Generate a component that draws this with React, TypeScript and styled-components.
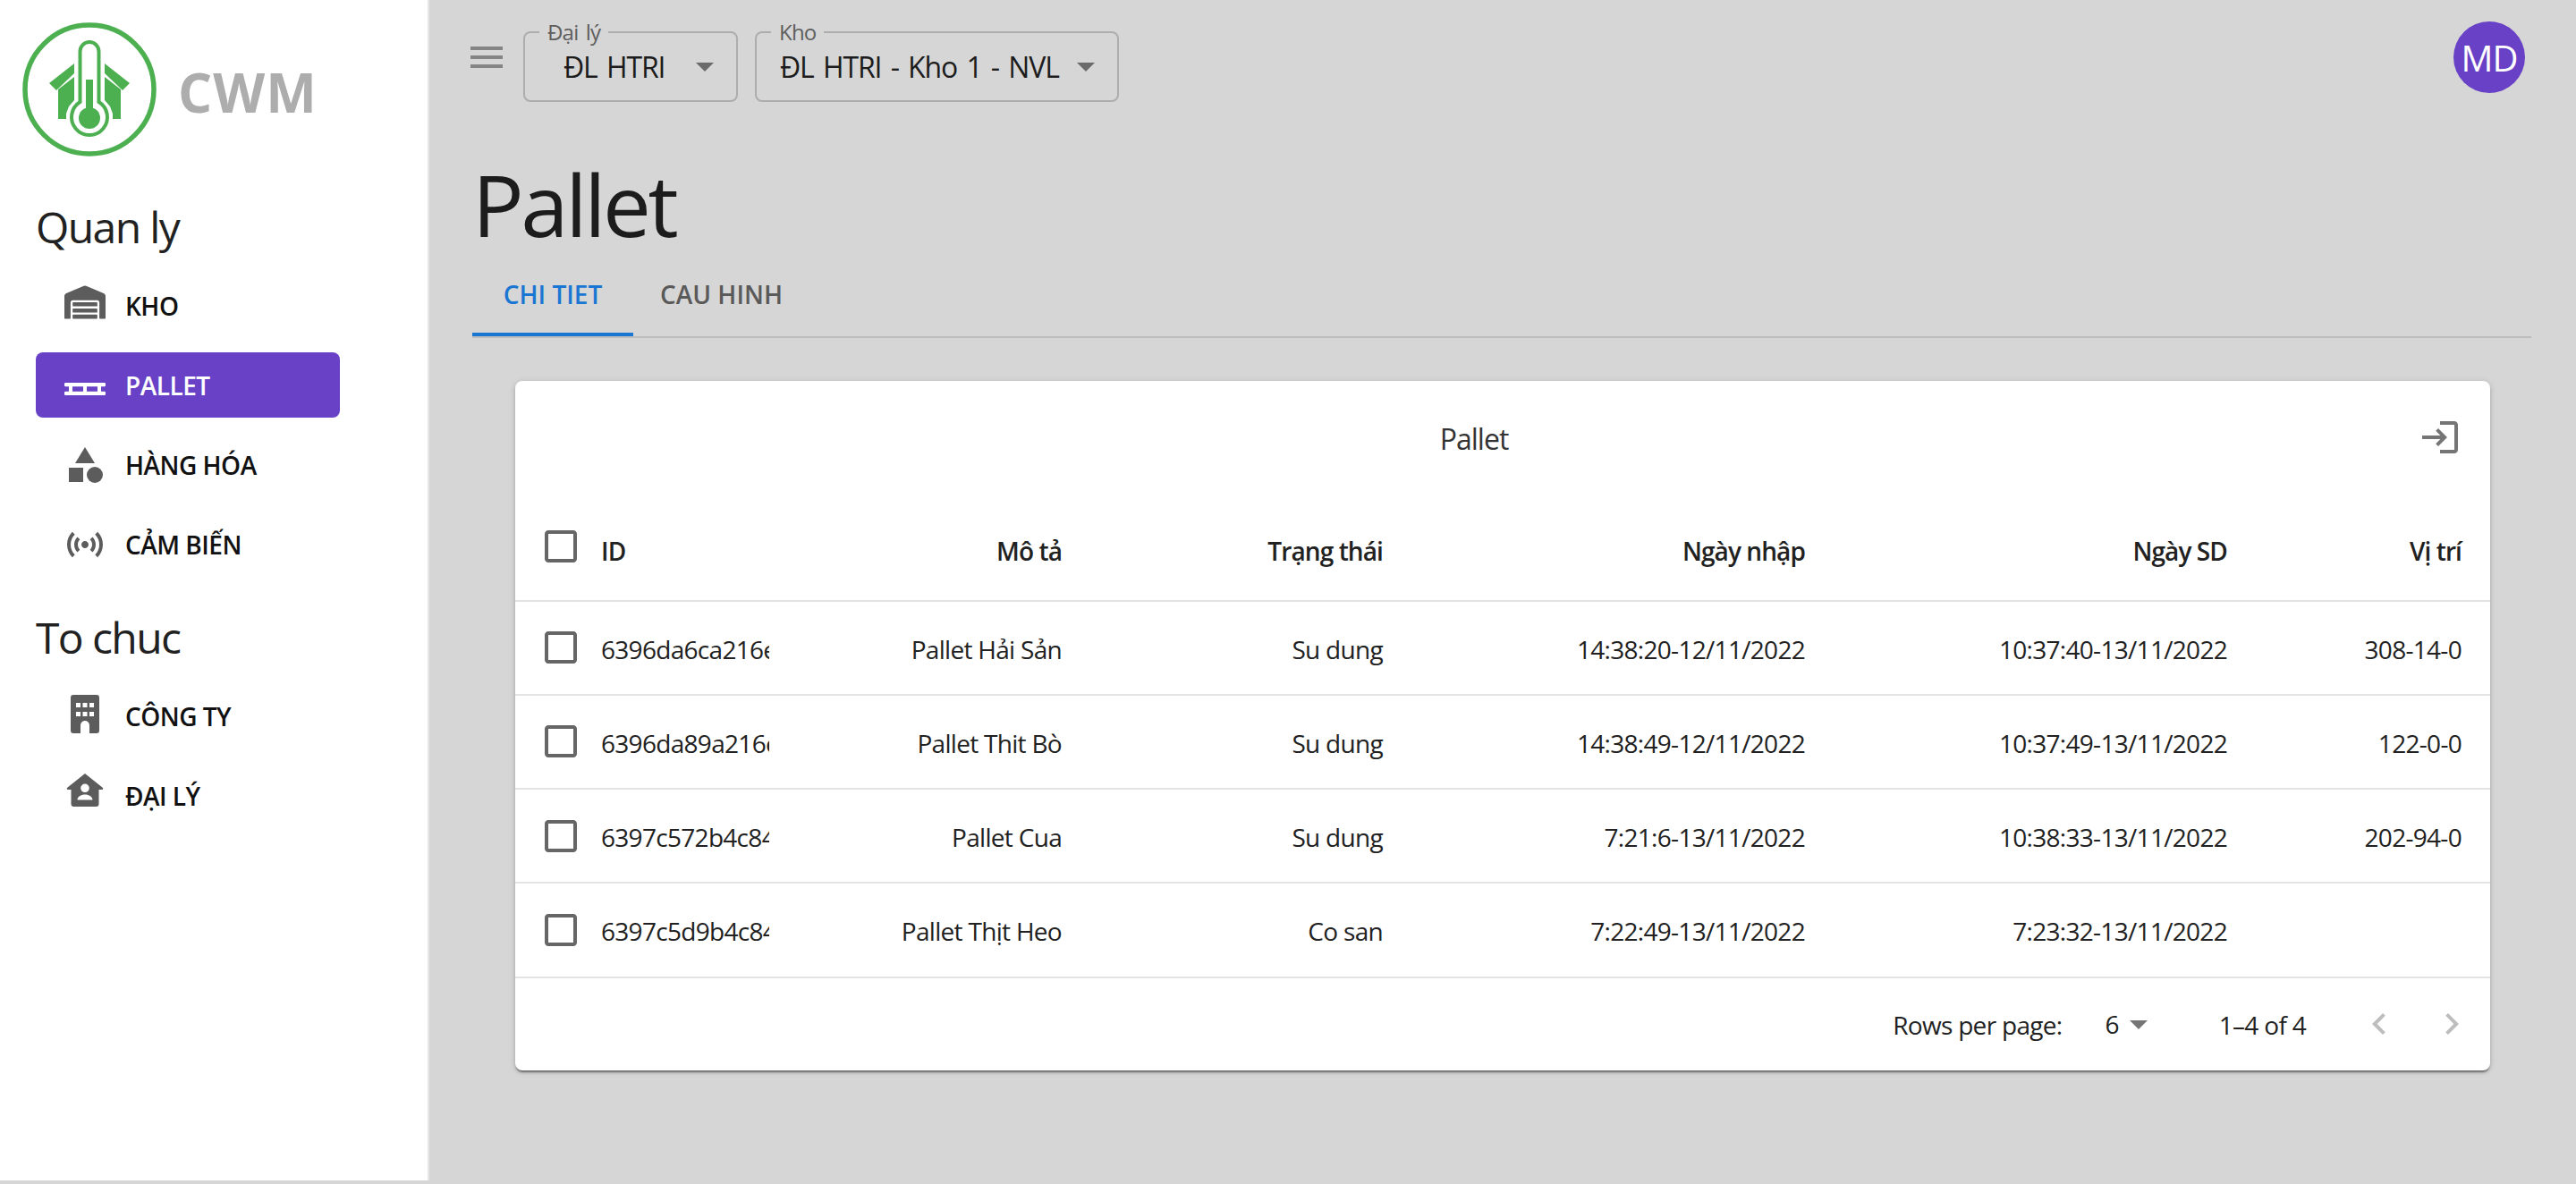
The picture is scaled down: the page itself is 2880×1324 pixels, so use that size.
import React from "react";
import styled, { createGlobalStyle } from "styled-components";
import { FaWarehouse } from "react-icons/fa";
import {
  MdCategory,
  MdSensors,
  MdMenu,
  MdArrowDropDown,
  MdLogin,
  MdCheckBoxOutlineBlank,
  MdChevronLeft,
  MdChevronRight,
} from "react-icons/md";

const Global = createGlobalStyle`
  html, body { margin: 0; padding: 0; background: #d6d6d6; }
  body { font-family: "Open Sans", "Noto Sans", sans-serif; color: rgba(0,0,0,.87); }
  * { box-sizing: border-box; }
`;

const Shell = styled.div`
  display: grid;
  grid-template-columns: 480px 1fr;
  width: 2880px;
  height: 1324px;
  overflow: hidden;
  background: #d6d6d6;
`;

const Sidebar = styled.aside`
  height: 1320px;
  background: #fff;
  border-right: 2px solid #e6e6e6;
  padding: 25px 0 0 40px;
`;

const Brand = styled.div`
  display: flex;
  align-items: center;
  margin-left: -15px;
  height: 150px;
  gap: 24px;
`;

const BrandName = styled.div`
  font-size: 60px;
  font-weight: 700;
  color: #adadad;
  letter-spacing: 1px;
  line-height: 1;
  margin-top: 6px;
`;

const SectionTitle = styled.h2<{ $gap: number }>`
  margin: ${(p) => p.$gap}px 0 0 0;
  font-size: 48px;
  line-height: 60px;
  height: 60px;
  font-weight: 400;
  letter-spacing: -1.6px;
  color: #212121;
`;

const NavList = styled.nav<{ $gap: number }>`
  display: flex;
  flex-direction: column;
  gap: 16px;
  width: 340px;
  margin-top: ${(p) => p.$gap}px;
`;

const NavItem = styled.a<{ $active?: boolean }>`
  display: flex;
  align-items: center;
  height: 73px;
  border-radius: 8px;
  background: ${(p) => (p.$active ? "#6941c6" : "transparent")};
  color: ${(p) => (p.$active ? "#fff" : "#111")};
  font-size: 28px;
  font-weight: 600;
  letter-spacing: -0.5px;
  white-space: nowrap;
`;

const NavIcon = styled.span<{ $dy?: number }>`
  display: flex;
  align-items: center;
  justify-content: center;
  flex: none;
  width: 100px;
  height: 100%;
  padding-left: 10px;
  color: #5c5c5c;
  padding-top: ${(p) => Math.max(p.$dy ?? 0, 0) * 2}px;
  padding-bottom: ${(p) => Math.max(-(p.$dy ?? 0), 0) * 2}px;
`;

const Main = styled.main`
  display: flex;
  flex-direction: column;
  padding-left: 40px;
  padding-right: 50px;
  min-width: 0;
`;

const TopBar = styled.header`
  display: flex;
  align-items: flex-start;
  height: 135px;
  padding-top: 35px;
`;

const MenuButton = styled.span`
  display: flex;
  flex: none;
  width: 48px;
  height: 48px;
  margin-top: 5px;
  color: #858585;
`;

const SelectBox = styled.div<{ $w: number; $ml: number; $pl: number }>`
  position: relative;
  display: flex;
  align-items: center;
  flex: none;
  width: ${(p) => p.$w}px;
  height: 79px;
  margin-left: ${(p) => p.$ml}px;
  padding: 0 12px 0 ${(p) => p.$pl}px;
  border: 2px solid #adadad;
  border-radius: 8px;
  font-size: 32px;
  letter-spacing: -1.1px;
  word-spacing: 3px;
  color: #1c1c1c;
  white-space: nowrap;
`;

const SelectLabel = styled.span`
  position: absolute;
  top: -15px;
  left: 16px;
  padding: 0 9px;
  background: #d6d6d6;
  font-size: 24px;
  line-height: 28px;
  letter-spacing: -0.8px;
  color: #5e5e5e;
`;

const SelectArrow = styled.span`
  position: absolute;
  right: 11px;
  top: 13px;
  display: flex;
  color: #6b6b6b;
`;

const Avatar = styled.div`
  display: flex;
  align-items: center;
  justify-content: center;
  flex: none;
  width: 80px;
  height: 80px;
  margin: -11px 7px 0 auto;
  border-radius: 50%;
  background: #6941c6;
  color: #fff;
  font-size: 40px;
  letter-spacing: -1px;
`;

const Content = styled.div`
  display: flex;
  flex-direction: column;
  margin-left: 8px;
`;

const PageTitle = styled.h1`
  margin: 0;
  height: 145px;
  font-size: 96px;
  line-height: 186px;
  font-weight: 400;
  letter-spacing: -3.4px;
  color: #1c1c1c;
`;

const Tabs = styled.div`
  display: flex;
  height: 98px;
  border-bottom: 2px solid #bdbdbd;
`;

const Tab = styled.div<{ $active?: boolean; $w: number }>`
  position: relative;
  display: flex;
  align-items: center;
  justify-content: center;
  width: ${(p) => p.$w}px;
  height: 96px;
  font-size: 28px;
  font-weight: 600;
  letter-spacing: 0;
  color: ${(p) => (p.$active ? "#1976d2" : "#5a5a5a")};
  border-bottom: 4px solid ${(p) => (p.$active ? "#1976d2" : "transparent")};
  padding-top: 6px;
`;

const Card = styled.section`
  width: 2208px;
  height: 771px;
  margin: 48px 0 0 48px;
  background: #fff;
  border-radius: 8px;
  box-shadow: 0 3px 2px -1px rgba(0,0,0,.4), 0 2px 4px rgba(0,0,0,.14), 0 1px 8px rgba(0,0,0,.1);
  overflow: hidden;
`;

const CardHead = styled.div`
  display: flex;
  align-items: center;
  justify-content: center;
  position: relative;
  height: 130px;
  font-size: 32px;
  padding: 0 64px 2px 0;
  letter-spacing: -1px;
  color: #333;
`;

const CardAction = styled.span`
  position: absolute;
  top: 39px;
  right: 32px;
  display: flex;
  color: #757575;
`;

const Row = styled.div<{ $head?: boolean }>`
  display: grid;
  grid-template-columns: 96px 188px 327px 359px 472px 472px 262px;
  align-items: center;
  height: ${(p) => (p.$head ? "116.5px" : "105.25px")};
  padding-right: 32px;
  border-bottom: 2px solid #e3e3e3;
  font-size: 28px;
  font-weight: ${(p) => (p.$head ? 600 : 400)};
  letter-spacing: ${(p) => (p.$head ? "-0.9px" : "-0.7px")};
  color: #212121;
`;

const CheckCell = styled.div<{ $up?: boolean }>`
  display: flex;
  padding-left: 27px;
  color: #666;
  margin-top: ${(p) => (p.$up ? "-5px" : "0")};
`;

const IdCell = styled.div<{ $head?: boolean }>`
  overflow: hidden;
  white-space: nowrap;
  padding-top: ${(p) => (p.$head ? "5px" : "3px")};
`;

const NumCell = styled.div<{ $head?: boolean }>`
  text-align: right;
  white-space: nowrap;
  padding-top: ${(p) => (p.$head ? "5px" : "3px")};
`;

const Pager = styled.div`
  display: flex;
  align-items: center;
  justify-content: flex-end;
  height: 103px;
  padding-right: 19px;
  font-size: 28px;
  letter-spacing: -0.7px;
  color: #212121;
`;

const PagerCount = styled.span`
  margin: 2px 58px 0 66px;
`;

const PagerLabel = styled.span`
  margin-top: 2px;
`;

const PagerSize = styled.span`
  margin: -1px -2px 0 48px;
`;

const PagerIcon = styled.span<{ $color: string; $ml?: number }>`
  display: flex;
  color: ${(p) => p.$color};
  margin-left: ${(p) => p.$ml ?? 0}px;
`;

const Logo = () => (
  <svg width="150" height="150" viewBox="0 0 150 150">
    <circle cx="75" cy="75" r="72" fill="none" stroke="#4caf50" strokeWidth="5.5" />
    <g fill="#4caf50">
      <polygon points="30,68 58,46 58,57 38,76" />
      <polygon points="120,68 92,46 92,57 112,76" />
      <polygon points="40,75 58,61 58,87 52,94 49,102 49,108 40,108" />
      <polygon points="110,75 92,61 92,87 98,94 101,102 101,108 110,108" />
    </g>
    <path
      d="M64.5 89V32.5a10.5 10.5 0 0 1 21 0V89a20 20 0 1 1-21 0z"
      fill="#fff"
      stroke="#4caf50"
      strokeWidth="4"
    />
    <circle cx="75" cy="107" r="12" fill="#4caf50" />
    <rect x="71" y="64" width="8" height="36" fill="#4caf50" />
  </svg>
);

const PalletIcon = () => (
  <svg width="46" height="14" viewBox="0 0 46 14" fill="#fff">
    <rect x="0" y="0" width="46" height="4.2" rx="1.2" />
    <rect x="0" y="9.8" width="46" height="4.2" rx="1.2" />
    <rect x="5" y="3" width="4" height="8" />
    <rect x="21" y="3" width="4" height="8" />
    <rect x="37" y="3" width="4" height="8" />
  </svg>
);

const BuildingIcon = () => (
  <svg width="32" height="43" viewBox="0 0 32 43">
    <path
      fillRule="evenodd"
      fill="#5c5c5c"
      d="M3 0h26a3 3 0 0 1 3 3v37a3 3 0 0 1-3 3h-8V34a5 5 0 0 0-10 0v9H3a3 3 0 0 1-3-3V3a3 3 0 0 1 3-3z
      M6 9v5h5V9zM13.5 9v5h5V9zM21 9v5h5V9zM6 19v5h5v-5zM13.5 19v5h5v-5zM21 19v5h5v-5z"
    />
  </svg>
);

const AgencyIcon = () => (
  <svg width="42" height="37" viewBox="0 0 42 37">
    <path
      fillRule="evenodd"
      fill="#5c5c5c"
      d="M21 0l20 16a1.2 1.2 0 0 1-1 2h-3.5v16a3 3 0 0 1-3 3h-25a3 3 0 0 1-3-3V18H2a1.2 1.2 0 0 1-1-2z
      M21 11.5a4.8 4.8 0 1 0 0 9.6a4.8 4.8 0 0 0 0-9.6z
      M12.5 29.5h17c0-3.4-4-6-8.5-6s-8.5 2.6-8.5 6z"
    />
  </svg>
);

const rows = [
  ["6396da6ca216e8c1", "Pallet Hải Sản", "Su dung", "14:38:20-12/11/2022", "10:37:40-13/11/2022", "308-14-0"],
  ["6396da89a216e8c1", "Pallet Thit Bò", "Su dung", "14:38:49-12/11/2022", "10:37:49-13/11/2022", "122-0-0"],
  ["6397c572b4c84a10", "Pallet Cua", "Su dung", "7:21:6-13/11/2022", "10:38:33-13/11/2022", "202-94-0"],
  ["6397c5d9b4c84a10", "Pallet Thịt Heo", "Co san", "7:22:49-13/11/2022", "7:23:32-13/11/2022", ""],
];

export default function App() {
  return (
    <Shell>
      <Global />
      <Sidebar>
        <Brand>
          <Logo />
          <BrandName>CWM</BrandName>
        </Brand>
        <SectionTitle $gap={49}>Quan ly</SectionTitle>
        <NavList $gap={21}>
          <NavItem>
            <NavIcon $dy={-4}><FaWarehouse size={46} /></NavIcon>KHO
          </NavItem>
          <NavItem $active>
            <NavIcon $dy={4}><PalletIcon /></NavIcon>PALLET
          </NavItem>
          <NavItem>
            <NavIcon><MdCategory size={48} /></NavIcon>HÀNG HÓA
          </NavItem>
          <NavItem>
            <NavIcon><MdSensors size={48} /></NavIcon>CẢM BIẾN
          </NavItem>
        </NavList>
        <SectionTitle $gap={38}>To chuc</SectionTitle>
        <NavList $gap={21}>
          <NavItem>
            <NavIcon $dy={-2}><BuildingIcon /></NavIcon>CÔNG TY
          </NavItem>
          <NavItem>
            <NavIcon $dy={-6}><AgencyIcon /></NavIcon>ĐẠI LÝ
          </NavItem>
        </NavList>
      </Sidebar>
      <Main>
        <TopBar>
          <MenuButton><MdMenu size={48} /></MenuButton>
          <SelectBox $w={240} $ml={17} $pl={43}>
            <SelectLabel>Đại lý</SelectLabel>
            ĐL HTRI
            <SelectArrow><MdArrowDropDown size={48} /></SelectArrow>
          </SelectBox>
          <SelectBox $w={407} $ml={19} $pl={26}>
            <SelectLabel>Kho</SelectLabel>
            ĐL HTRI - Kho 1 - NVL
            <SelectArrow><MdArrowDropDown size={48} /></SelectArrow>
          </SelectBox>
          <Avatar>MD</Avatar>
        </TopBar>
        <Content>
          <PageTitle>Pallet</PageTitle>
          <Tabs>
            <Tab $active $w={180}>CHI TIET</Tab>
            <Tab $w={197}>CAU HINH</Tab>
          </Tabs>
          <Card>
            <CardHead>
              Pallet
              <CardAction><MdLogin size={48} /></CardAction>
            </CardHead>
            <Row $head>
              <CheckCell $up><MdCheckBoxOutlineBlank size={48} /></CheckCell>
              <IdCell $head>ID</IdCell>
              <NumCell $head>Mô tả</NumCell>
              <NumCell $head>Trạng thái</NumCell>
              <NumCell $head>Ngày nhập</NumCell>
              <NumCell $head>Ngày SD</NumCell>
              <NumCell $head>Vị trí</NumCell>
            </Row>
            {rows.map((r) => (
              <Row key={r[0]}>
                <CheckCell><MdCheckBoxOutlineBlank size={48} /></CheckCell>
                <IdCell>{r[0]}</IdCell>
                <NumCell>{r[1]}</NumCell>
                <NumCell>{r[2]}</NumCell>
                <NumCell>{r[3]}</NumCell>
                <NumCell>{r[4]}</NumCell>
                <NumCell>{r[5]}</NumCell>
              </Row>
            ))}
            <Pager>
              <PagerLabel>Rows per page:</PagerLabel>
              <PagerSize>6</PagerSize>
              <PagerIcon $color="#757575"><MdArrowDropDown size={48} /></PagerIcon>
              <PagerCount>1–4 of 4</PagerCount>
              <PagerIcon $color="#bdbdbd"><MdChevronLeft size={48} /></PagerIcon>
              <PagerIcon $color="#bdbdbd" $ml={33}><MdChevronRight size={48} /></PagerIcon>
            </Pager>
          </Card>
        </Content>
      </Main>
    </Shell>
  );
}
